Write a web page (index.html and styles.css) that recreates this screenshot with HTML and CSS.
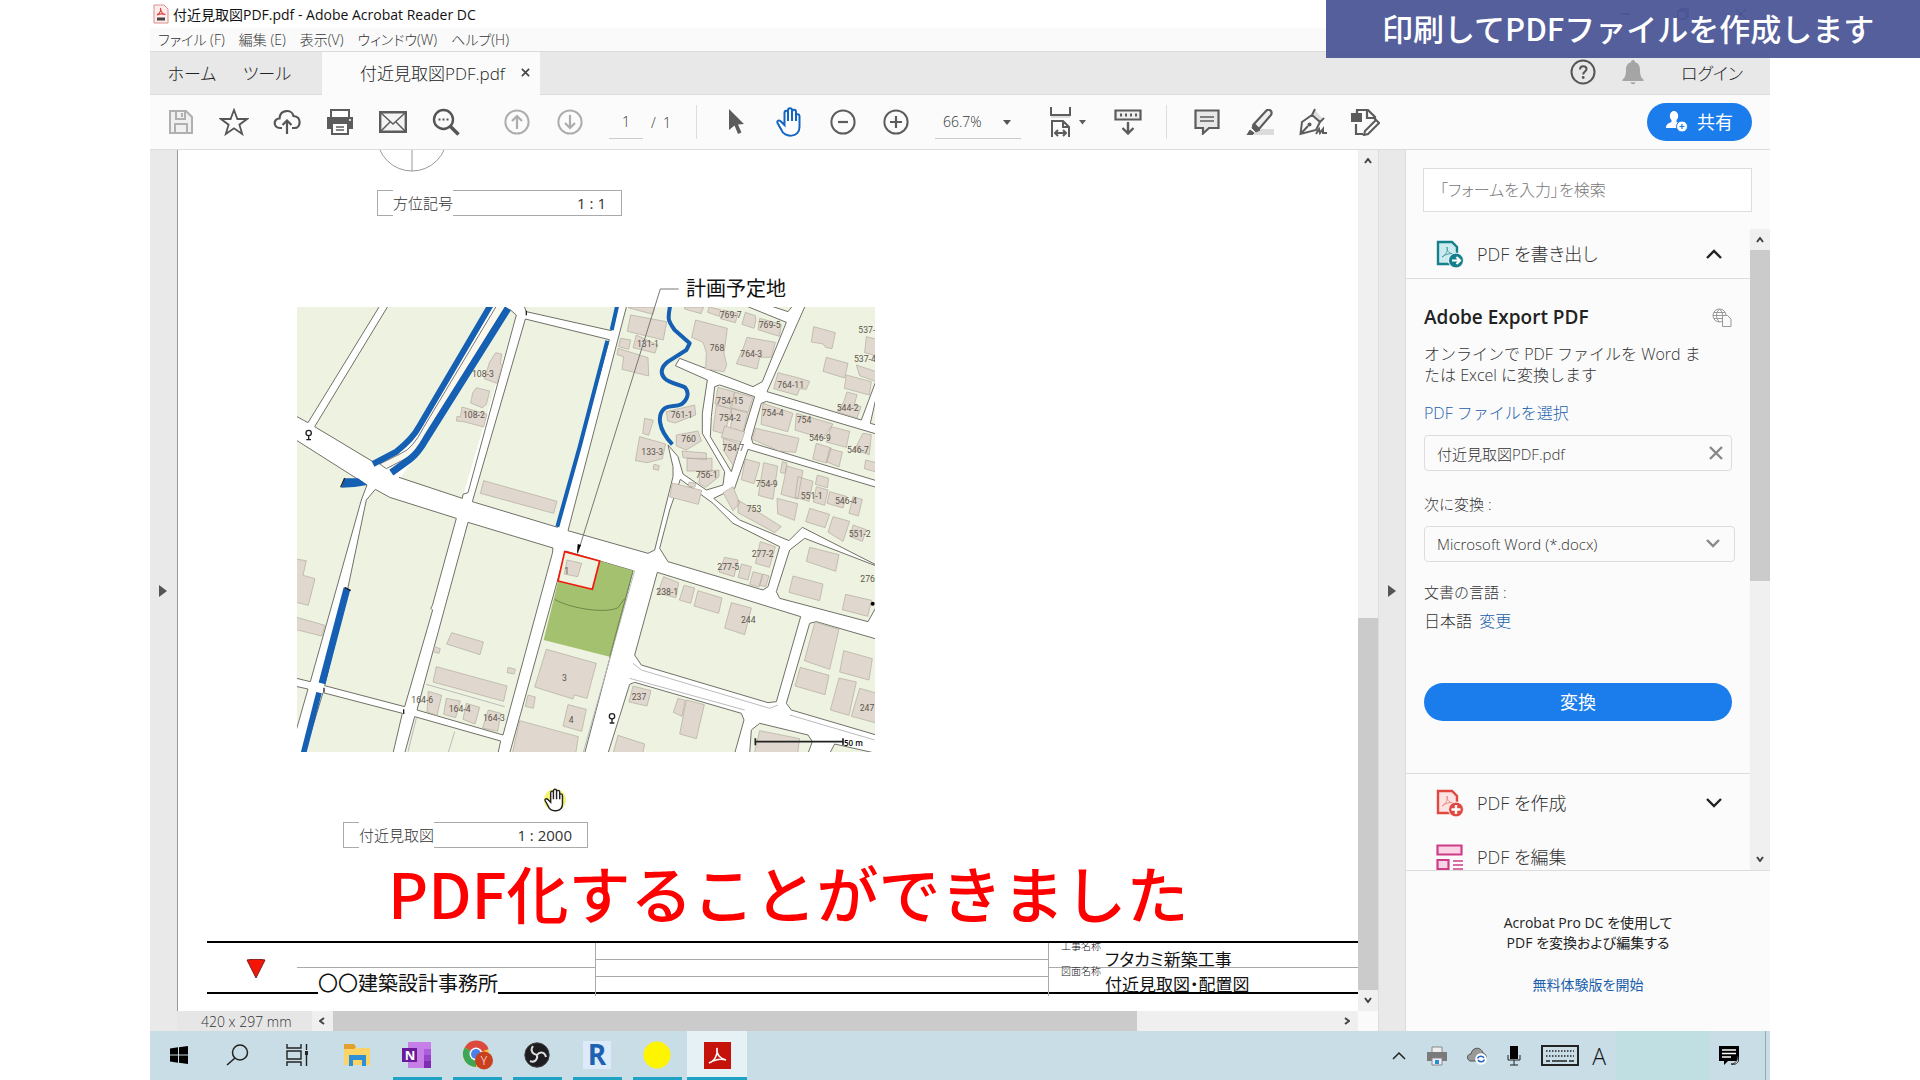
FILE: index.html
```
<!DOCTYPE html>
<html lang="ja">

<head>
    <meta charset="utf-8">
    <title>付近見取図PDF.pdf - Adobe Acrobat Reader DC</title>
    <link rel="stylesheet" href="styles.css">
</head>

<body>
    <div class="banner">印刷してPDFファイルを作成します</div>

    <div class="window">
        <header class="titlebar">
            <svg width="16" height="20" viewBox="0 0 16 20"><path d="M1 1h10l4 4v14H1z" fill="#fdeceb" stroke="#d9908c"/><path d="M4 11c3-2 4-5 3.500-7M7.500 5c.5 3 2 5 5 5.500M4 11c2-1 5-1.500 8.500-.5" fill="none" stroke="#d9443c" stroke-width="1.200"/><path d="M4 15h8" stroke="#444" stroke-width="3"/></svg>
            <span class="window-title">付近見取図PDF.pdf - Adobe Acrobat Reader DC</span>
            <div class="window-controls">
                <button aria-label="最小化"><svg width="12" height="12"><path d="M1 6h10" stroke="#22a"/></svg></button>
                <button aria-label="元に戻す"><svg width="12" height="12"><path d="M1 3h8v8H1zM3 3V1h8v8H9" fill="none" stroke="#22a"/></svg></button>
                <button aria-label="閉じる"><svg width="12" height="12"><path d="M1 1l10 10M11 1L1 11" stroke="#22a"/></svg></button>
            </div>
        </header>

        <nav class="menubar">
            <a href="#">ファイル (F)</a>
            <a href="#">編集 (E)</a>
            <a href="#">表示(V)</a>
            <a href="#">ウィンドウ(W)</a>
            <a href="#">ヘルプ(H)</a>
        </nav>

        <div class="tabs">
            <button class="tab-home">ホーム</button>
            <button class="tab-tool">ツール</button>
            <div class="tab-doc">
                <span>付近見取図PDF.pdf</span>
                <button aria-label="タブを閉じる"><svg width="9" height="9" viewBox="0 0 10 10"><path d="M1 1l8 8M9 1L1 9" stroke="#444" stroke-width="1.800"/></svg></button>
            </div>
            <div class="tabs-right">
                <button aria-label="ヘルプ"><svg width="26" height="26" viewBox="0 0 26 26"><circle cx="13" cy="13" r="11.500" fill="none" stroke="#555" stroke-width="2"/><path d="M10 10.500c0-4.500 6.500-4 6.500-.5 0 2.500-3.300 2.500-3.300 5.500" fill="none" stroke="#555" stroke-width="2"/><circle cx="13.200" cy="18.500" r="1.400" fill="#555"/></svg></button>
                <button aria-label="通知"><svg width="22" height="25" viewBox="0 0 22 25"><path d="M11 0c1.500 0 2 1 2 2.200 4 1 5 4 5 8 0 5 1 7 3.500 9.500v1.300H.5v-1.300C3 17.200 4 15.200 4 10.200c0-4 1-7 5-8C9 1 9.500 0 11 0zM8.500 22.300h5c-.5 2.500-4.500 2.500-5 0z" fill="#a5a5a5"/></svg></button>
                <a href="#">ログイン</a>
            </div>
        </div>

        <div class="toolbar">
            <button class="tool" aria-label="保存"><svg width="26" height="26" viewBox="0 0 26 26"><path d="M2 2h16l6 6v16H2z" fill="#f0f0f0" stroke="#b0b0b0" stroke-width="2"/><path d="M8 2v8h9V2M14 4v4M7 24v-9h12v9" fill="none" stroke="#b0b0b0" stroke-width="2"/></svg></button>
            <button class="tool" aria-label="スター"><svg width="30" height="28" viewBox="0 0 30 28"><path d="M15 2l3.400 9H28l-7.600 5.700L23.200 26 15 20.300 6.800 26l2.800-9.300L2 11h9.600z" fill="none" stroke="#555" stroke-width="1.800"/></svg></button>
            <button class="tool" aria-label="アップロード"><svg width="28" height="26" viewBox="0 0 28 26"><path d="M9 19H7C0 19 0 9.500 6.500 9.500 7 0 19 0 20.500 7 29 7.500 28 19 21.500 19H19M14 25V12M9.500 16l4.500-4.500 4.500 4.500" fill="none" stroke="#555" stroke-width="2.200"/></svg></button>
            <button class="tool" aria-label="印刷"><svg width="28" height="26" viewBox="0 0 28 26"><path d="M5 8V1h18v7" fill="#fff" stroke="#5c5c5c" stroke-width="2"/><path d="M1 8h26v12H1z" fill="#5c5c5c"/><path d="M6 14h16v11H6z" fill="#fff" stroke="#5c5c5c" stroke-width="2"/><path d="M10 18h8M10 21h8" stroke="#5c5c5c" stroke-width="1.500"/><circle cx="24" cy="11" r="1" fill="#fff"/></svg></button>
            <button class="tool" aria-label="メール"><svg width="28" height="22" viewBox="0 0 28 22"><path d="M1.200 1.200h25.600v19.600H1.200z" fill="#f4f4f4" stroke="#5c5c5c" stroke-width="2.400"/><path d="M2 2l12 11L26 2M2 20l9-9M26 20l-9-9" fill="none" stroke="#5c5c5c" stroke-width="1.500"/></svg></button>
            <button class="tool" aria-label="検索"><svg width="28" height="28" viewBox="0 0 28 28"><circle cx="11.500" cy="11.500" r="9.500" fill="none" stroke="#555" stroke-width="2.400"/><path d="M18.500 18.500l8 8" stroke="#555" stroke-width="3.600"/><path d="M6.500 11.500h10" stroke="#555" stroke-width="2.200" stroke-dasharray="2 2"/></svg></button>
            <button class="tool page-up" aria-label="前のページ"><svg width="26" height="26" viewBox="0 0 26 26"><circle cx="13" cy="13" r="11.600" fill="none" stroke="#adadad" stroke-width="2"/><path d="M13 20V7M8 12l5-5 5 5" fill="none" stroke="#adadad" stroke-width="2.200"/></svg></button>
            <button class="tool" aria-label="次のページ"><svg width="26" height="26" viewBox="0 0 26 26"><circle cx="13" cy="13" r="11.600" fill="none" stroke="#adadad" stroke-width="2"/><path d="M13 6v13M8 14l5 5 5-5" fill="none" stroke="#adadad" stroke-width="2.200"/></svg></button>
            <input class="page-number" type="text" value="1" aria-label="ページ">
            <span class="page-total">/&nbsp; 1</span>
            <span class="divider"></span>
            <button class="tool tool-select" aria-label="選択"><svg width="17" height="26" viewBox="0 0 17 26"><path d="M1 0l15 15-6 .5 3.500 8-3.500 1.500-3.500-8.500L1 21z" fill="#5c5c5c"/></svg></button>
            <button class="tool" aria-label="手のひら"><svg width="28" height="30" viewBox="0 0 28 30"><path d="M8.500 18V6c0-3 3.500-3 3.500 0v-2.500c0-3 4-3 4 0V5c0-3 4-3 4 0v4c0-2.500 3.500-2.500 3.500.5V20c0 11-15.500 11-18 3L1.500 16c-1-2.500 2-3.500 3.500-1.500zM12 6v8M16 4v10M20 6v8" fill="#fff" stroke="#1467bf" stroke-width="2"/></svg></button>
            <button class="tool" aria-label="縮小"><svg width="26" height="26" viewBox="0 0 26 26"><circle cx="13" cy="13" r="11.600" fill="none" stroke="#5c5c5c" stroke-width="2"/><path d="M8 13h10" stroke="#5c5c5c" stroke-width="2.200"/></svg></button>
            <button class="tool" aria-label="拡大"><svg width="26" height="26" viewBox="0 0 26 26"><circle cx="13" cy="13" r="11.600" fill="none" stroke="#5c5c5c" stroke-width="2"/><path d="M7 13h12M13 7v12" stroke="#5c5c5c" stroke-width="2.200"/></svg></button>
            <div class="zoom-box">
                <select aria-label="ズーム"><option>66.7%</option></select>
                <svg width="8" height="5"><path d="M0 0h8L4 5z" fill="#555"/></svg>
            </div>
            <button class="tool tool-fit" aria-label="幅に合わせる"><svg width="38" height="30" viewBox="0 0 38 30"><path d="M1 0v8h19V0M2 30V14h11l6 6v10M13 14v6h6M5 26h11M8 23l-3 3 3 3M13 23l3 3-3 3" fill="none" stroke="#5c5c5c" stroke-width="2"/><path d="M1 10h19" stroke="#ddd" stroke-width="2"/><path d="M29 13h7l-3.500 4.500z" fill="#5c5c5c"/></svg></button>
            <button class="tool" aria-label="スクロール"><svg width="28" height="26" viewBox="0 0 28 26"><path d="M1.500 1.500h25v9h-25z" fill="#eee" stroke="#5c5c5c" stroke-width="2.200"/><path d="M6 6h17" stroke="#5c5c5c" stroke-width="3" stroke-dasharray="2 3"/><path d="M14 13v11M8.500 19l5.500 5.500 5.500-5.500" fill="none" stroke="#5c5c5c" stroke-width="2.400"/></svg></button>
            <span class="divider divider-right"></span>
            <button class="tool" aria-label="注釈"><svg width="26" height="26" viewBox="0 0 26 26"><path d="M1.500 1.500h23V19H15l-6 5.500V19H1.500z" fill="#e8e8e8" stroke="#5c5c5c" stroke-width="2.200"/><path d="M6 8h14M6 12h14" stroke="#5c5c5c" stroke-width="1.600"/></svg></button>
            <button class="tool" aria-label="ハイライト"><svg width="28" height="26" viewBox="0 0 28 26"><path d="M9 20h19v6H7z" fill="#dcdcdc"/><path d="M8 15L20 2c3-3 7 0 5 4L13 20z" fill="#eee" stroke="#5c5c5c" stroke-width="2.200"/><path d="M7 15l7 6-4 2-4-4zM4 21l4 3-2 2H1z" fill="#5c5c5c" stroke="#5c5c5c"/></svg></button>
            <button class="tool" aria-label="署名"><svg width="28" height="28" viewBox="0 0 28 28"><path d="M16 2l7 8-3 3-7-6z" fill="#ddd"/><path d="M1.500 26L3 14l10-7 8 7-4 8zM1.500 26L9 18M13 7l3-6M21 14l4-4M17 26l3-5 1 4 3-4v4h4" fill="none" stroke="#5c5c5c" stroke-width="2"/><circle cx="10.500" cy="16.500" r="2" fill="#5c5c5c"/></svg></button>
            <button class="tool" aria-label="その他のツール"><svg width="29" height="28" viewBox="0 0 29 28"><path d="M6 5V2h11l7 7v3M16 2v8h7" fill="none" stroke="#5c5c5c" stroke-width="2.200"/><path d="M0 5h11v9H0z" fill="#5c5c5c"/><path d="M5 16v10h7" fill="none" stroke="#5c5c5c" stroke-width="2.200"/><path d="M14 23L25 12l3 3-11 11-4 1z" fill="#fff" stroke="#5c5c5c" stroke-width="2"/></svg></button>
            <button class="share">
                <svg width="22" height="21" viewBox="0 0 22 21"><ellipse cx="8" cy="5" rx="4.200" ry="5" fill="#fff"/><path d="M0 17c0-4 3-5 5.500-6V9h5v2c2 1 3 1.500 3.500 6z" fill="#fff"/><circle cx="16" cy="15.500" r="5.500" fill="#fff" stroke="#1b7cec"/><path d="M16 13v5M13.500 15.500h5" stroke="#1b7cec" stroke-width="1.200"/></svg>
                共有
            </button>
        </div>

        <main class="main">
            <button class="strip strip-left" aria-label="ナビゲーションパネル"><svg width="8" height="12"><path d="M0 0l8 6-8 6z" fill="#555"/></svg></button>

            <section class="viewer">
                <div class="page-row">
                    <div class="sheet">
                        <svg class="north" width="70" height="22" viewBox="0 0 70 22"><circle cx="35" cy="-14" r="35" fill="none" stroke="#999"/><path d="M35 0v21" stroke="#999"/></svg>
                        <div class="label-box label-north"><span>方位記号</span><b>1 : 1</b></div>

                        <svg class="map" width="578" height="475" viewBox="22 21 1734 1425">
                            <clipPath id="frame"><path d="M22 111h1734v1335H22z"/></clipPath>
                            <g clip-path="url(#frame)">
                                <!-- blocks -->
                                <g class="block">
                                    <path d="M0 90H281L55 458 0 428z"/>
                                    <path class="bare" d="M292 111L75 470 250 578 320 545 370 500 600 111z"/>
                                    <path d="M303 95L75 470 250 575" fill="none"/>
                                    <path class="bare" d="M660 118l20 17-162 550-188-60 50-65z"/>
                                    <path d="M660 118l20 17-145 533-15 5-2 12-190-63" fill="none"/>
                                    <path d="M700 100l10 25 255 57 20-82z"/>
                                    <path d="M707 147l252 62-155 563-256-77z"/>
                                    <path d="M1013 100H1350l140 57-72 178-28 15-220-85-13 22 96 43-15 100v60l67 115-5 40-50 15-70-48-15-52-30-35 15 65v30l-55 220-20 10-240-68z"/>
                                    <path d="M1420 100l75 25 20-25z"/>
                                    <path d="M1550 100L1432 365l283 85 45-120V100z"/>
                                    <path d="M1760 380l-18 80 18 5z"/>
                                    <path d="M1275 350l15-5 105 35-70 225-63-105 3-60z"/>
                                    <path d="M1415 400l15-6 330 98v140l-370-112-5-15z"/>
                                    <path d="M1375 538l385 114v233l-222-113-40 40-148-62-78-65 63-30z"/>
                                    <path d="M1172 628l98 72 60 60 140 70-35 120-15 10-285-85-25-40 30-115z"/>
                                    <path d="M1545 805l215 83v122l-25 45-265-70-10-20 40-125z"/>
                                    <path d="M1103 907l430 133-73 255-25 3-380-113-20-30z"/>
                                    <path d="M1560 1060l20-5 180 52v288l-255-75-15-20z"/>
                                    <path d="M1020 1243l15-6 320 93 8 20-28 100H955z"/>
                                    <path d="M1385 1380l25-20 145 35 13 20-13 35H1380z"/>
                                    <path d="M1620 1450l15-28 125 28z"/>
                                    <path d="M828 843l202 59-145 548H660z"/>
                                    <path d="M535 757l255 77-2 16-148 545-258-75z"/>
                                    <path d="M257 658l43 24 200 63-72 262-5 8 6 5-84 290-240-63 60-247 65-310z"/>
                                    <path d="M0 498l232 147-17 45L62 1235 0 1220z"/>
                                    <path d="M0 1245l55 12L0 1450z"/>
                                    <path d="M100 1268l238 62-28 120H45z"/>
                                    <path d="M375 1340l258 73-8 37H345z"/>
                                </g>
                                <!-- kerb lines -->
                                <path d="M1030 1180l25 20 385 115 25-10M1020 1225l345 95M1500 1335l255 75M1035 902L880 1450M380 1345l-25 100M495 1385l-20 65M410 1243l235 67" fill="none" stroke="#bbb" stroke-width="3"/>
                                <!-- water -->
                                <path d="M622 105L402 472Q370 535 335 550L270 582l20 14 65-34Q390 535 410 495L650 105z" fill="#fbf8ee" stroke="#777" stroke-width="3"/>
                                <g fill="none" stroke="#1560b2">
                                    <path d="M603 105L388 470Q370 505 320 545L250 582" stroke-width="18"/>
                                    <path d="M655 115L410 505Q385 550 360 568L305 608" stroke-width="21"/>
                                    <path d="M983 105l-17 75M953 212l-83 318-67 240" stroke-width="12"/>
                                    <path d="M172 955l-75 285" stroke-width="21"/>
                                    <path d="M88 1268l-46 180" stroke-width="17"/>
                                    <path d="M1142 105c-10 45-5 50 13 75l45 40-10 20-55 35c-20 15-25 35-10 50 15 15 50 20 62 28 12 15 8 35-12 50-15 8-35 2-50 12-22 18-22 60 23 108" stroke-width="12" stroke-linejoin="round"/>
                                </g>
                                <path d="M165 625h40l28 20-38 6-40 2z" fill="#1560b2"/>
                                <path d="M153 652l12-28M165 952l18 10M103 1253v14M342 1318v14M710 122v14" stroke="#222" stroke-width="4"/>
                                <!-- park and site -->
                                <path d="M805 935l125-62 100 29-70 258-198-50z" fill="#a3c16f"/>
                                <path d="M795 988c40 25 150 45 190 25l20-28M1030 902l-70 258" fill="none" stroke="#6d8a49" stroke-width="3"/>
                                <path d="M825 845l105 28-22 85-103-25z" fill="#edf3e0" stroke="#f3170c" stroke-width="5"/>
                                <!-- buildings -->
                                <g class="building">
                                    <path d="M618 248l18 4-4 30 6 4-16 54-38-14 16-50z"/>
                                    <path d="M560 353l40 10-10 40-12 10-35-14 6-30z"/>
                                    <path d="M517 411l75 22-10 38-60-16-22-2 2-14 10 2z"/>
                                    <path d="M582 632l220 62-10 36-220-60z"/>
                                    <path d="M1020 111h75l-5 22-75-20z"/>
                                    <path d="M1023 135l108 20-10 55-108-26z"/>
                                    <path d="M993 205l30 5-6 28-30-8zM1040 195l64 30-8 24-66-16z"/>
                                    <path d="M985 235l90 28 2 55-80-20 5-38-20-6z"/>
                                    <path d="M1185 111h57l-8 20-49-14zM1258 111l35 8-4 20-35-12zM1300 120l45 10-8 28-45-12z"/>
                                    <path d="M1367 127l30 10 2 14-6 24-36-12zM1410 145l65 18-6 36-64-20z"/>
                                    <path d="M1218 150l95 25-10 75 8 35-8 20-55-8 2-50-10-30-34-15z"/>
                                    <path d="M1372 202l85 15-12 45-35 0-8 35-62-16 22-50z"/>
                                    <path d="M1572 170l65 18-10 48-20-4-6-10-36-6z"/>
                                    <path d="M1610 262l65 18-10 44-65-20z"/>
                                    <path d="M1465 308l55 14 40 12-10 24-20-2-8 20-70-20z"/>
                                    <path d="M1730 200l30 8v50l-35-10zM1700 285l60 20v30l-50-18zM1670 315l75 20-6 40-75-20z"/>
                                    <path d="M1672 366l30 8-8 30 20 6-12 34-60-18 20-30z"/>
                                    <path d="M1285 352l50 14-14 50-45-14z"/>
                                    <path d="M1335 366l55 16-14 44-50-12zM1325 415l50 14-16 60-38-12 6-30z"/>
                                    <path d="M1280 405l45 12-20 75-35-10z"/>
                                    <path d="M1305 468l60 18-10 30-60-14zM1300 505l50 16-20 65-25-40z"/>
                                    <path d="M1420 400l90 30-16 55-80-22z"/>
                                    <path d="M1520 430l110 32-30 44-84-26zM1625 470l55 14-10 48-60-16z"/>
                                    <path d="M1398 475l130 30-10 42-50-4-80-35z"/>
                                    <path d="M1580 520l45 14-14 45-42-12zM1620 536l38 10-10 45-38-16zM1720 490l25 4-6 60-45-14zM1728 570l32 8v28l-36-10z"/>
                                    <path d="M1130 425l85-20 3 30-62 24-22-6zM1065 445l26 6-14 45-18-6z"/>
                                    <path d="M1160 495l65-12 10 30-45 27-30-12z"/>
                                    <path d="M1050 500l78 22-10 44-45 12-36-6z"/>
                                    <path d="M1177 543l73 6v20l-70-6zM1192 565h75v38h-75zM1230 605l58-5v20l-40 32-20-12z"/>
                                    <path d="M1093 583l16 4-3 14-16-4zM1148 639l88 22-10 42-86-22zM1198 636l20 4-2 12-20-4z"/>
                                    <path d="M1367 567l44 12-18 62-38-12z"/>
                                    <path d="M1422 578l42 10-14 100-44-12zM1478 575l14 4-6 32-14-4z"/>
                                    <path d="M1492 588l48 14-16 85-50-14zM1525 620l45 14-12 60-42-12z"/>
                                    <path d="M1583 615l34 10-4 28-36-10zM1580 650l35 10-10 46-34-10zM1620 665l50 14-10 35-48-14z"/>
                                    <path d="M1690 680l28 8-12 50-28-8zM1462 685l62 16-10 50-50-20zM1560 715l60 18-14 40-58-18z"/>
                                    <path d="M1300 668l30-18 20 50-20 22zM1345 690l75 45 55 35-20 18-110-60z"/>
                                    <path d="M1630 740l50 14-20 60-45-28zM1690 765l40 14-12 35-36-14z"/>
                                    <path d="M1412 815l45 15-18 62-42-12zM1305 862l40 8-12 50-45-14z"/>
                                    <path d="M1355 882l30 8-10 40-30-8zM1390 905l28 8-10 38-28-8zM1420 912l18 6-10 32-18-4z"/>
                                    <path d="M1560 832l88 22-10 50-88-30zM1510 918l90 24-10 50-92-25zM1668 973l78 18-12 48-76-20z"/>
                                    <path d="M1122 920l45 18-8 45-55-14zM1183 946l32 8-12 46-34-10zM1225 962l72 22-10 46-74-22z"/>
                                    <path d="M1325 998l60 16-20 80-60-20z"/>
                                    <path d="M1576 1056l72 22-28 120-76-26zM1532 1192l86 24-12 58-90-26zM1662 1142l86 24-10 64-88-24zM1648 1224l52 12-22 100-56-16zM1710 1255l50 14v90l-75-20z"/>
                                    <path d="M1030 1248l54 14-12 46-54-12zM1165 1285l22 6-10 48-26-12zM1190 1290l54 14-24 102-50-14z"/>
                                    <path d="M985 1396l80 26-6 30H970zM1410 1382l120 24-6 44h-130z"/>
                                    <path d="M832 870l44 10-12 40-40-8z"/>
                                    <path d="M770 1138l150 42-28 105-38-10-4 12-115-36z"/>
                                    <path d="M835 1304l55 14-14 66-56-16zM715 1275l22 6-6 34-24-6zM690 1352l176 48-8 50H668z"/>
                                    <path d="M486 1088l95 28-10 38-100-32zM440 1190l212 58-10 46-212-58z"/>
                                    <path d="M434 1130l18 6-4 14-16-4zM655 1192l22 6-4 14-20-4z"/>
                                    <path d="M416 1264l40 12-14 60-30-10zM470 1285l42 8-14 50-36-10zM530 1300l40 12-14 50-36-14zM596 1320l38 10-10 54-45-10z"/>
                                    <path d="M0 864l50 8-10 44 36 10-20 80-56-14zM0 1036l106 30-10 32-96-24z"/>
                                </g>
                                <!-- lot numbers -->
                                <g class="lot">
                                    <text x="547" y="321">108-3</text>
                                    <text x="520" y="445">108-2</text>
                                    <text x="1042" y="230">131-1</text>
                                    <text x="1290" y="143">769-7</text>
                                    <text x="1407" y="174">769-5</text>
                                    <text x="1260" y="243">768</text>
                                    <text x="1352" y="261">764-3</text>
                                    <text x="1463" y="355">764-11</text>
                                    <text x="1706" y="188">537-</text>
                                    <text x="1693" y="276">537-4</text>
                                    <text x="1641" y="424">544-2</text>
                                    <text x="1280" y="402">754-15</text>
                                    <text x="1288" y="454">754-2</text>
                                    <text x="1298" y="542">754-7</text>
                                    <text x="1416" y="437">754-4</text>
                                    <text x="1521" y="458">754</text>
                                    <text x="1558" y="514">546-9</text>
                                    <text x="1672" y="549">546-7</text>
                                    <text x="1143" y="445">761-1</text>
                                    <text x="1175" y="516">760</text>
                                    <text x="1055" y="555">133-3</text>
                                    <text x="1218" y="623">756-1</text>
                                    <text x="1398" y="651">754-9</text>
                                    <text x="1533" y="686">551-1</text>
                                    <text x="1636" y="702">546-4</text>
                                    <text x="1371" y="726">753</text>
                                    <text x="1677" y="800">551-2</text>
                                    <text x="1386" y="860">277-2</text>
                                    <text x="1283" y="900">277-5</text>
                                    <text x="1712" y="937">276</text>
                                    <text x="1100" y="975">238-1</text>
                                    <text x="1354" y="1060">244</text>
                                    <text x="1026" y="1290">237</text>
                                    <text x="1710" y="1324">247</text>
                                    <text x="817" y="1233">3</text>
                                    <text x="837" y="1358">4</text>
                                    <text x="824" y="912">1</text>
                                    <text x="365" y="1298">164-6</text>
                                    <text x="477" y="1326">164-4</text>
                                    <text x="580" y="1354">164-3</text>
                                </g>
                                <g fill="none" stroke="#222" stroke-width="4">
                                    <circle cx="57" cy="489" r="8"/><path d="M57 497v14M50 509h14"/>
                                    <circle cx="967" cy="1339" r="8"/><path d="M967 1347v14M960 1359h14"/>
                                    <path d="M1397 1415h263M1397 1405v21M1660 1405v21" stroke-width="5"/>
                                </g>
                                <circle cx="1749" cy="1001" r="6"/>
                                <text class="scale" x="1663" y="1428">50 m</text>
                            </g>
                            <path d="M1167 57h-55L864 850" fill="none" stroke="#777" stroke-width="3"/>
                            <path d="M862 852l2-30 10 3z"/>
                            <text class="site-name" x="1189" y="78">計画予定地</text>
                        </svg>

                        <div class="label-box label-map"><span>付近見取図</span><b>1 : 2000</b></div>
                        <p class="caption">PDF化することができました</p>

                        <div class="title-block">
                            <div class="mark"><svg width="20" height="20" viewBox="0 0 20 20"><path d="M1 1q9-2 18 0l-9 18z" fill="#f51505" stroke="#722"/></svg></div>
                            <div class="company"><div class="rule"></div><span>〇〇建築設計事務所</span></div>
                            <div class="blank"><i></i><i></i><i></i></div>
                            <dl class="names">
                                <div><dt>工事名称</dt><dd>フタカミ新築工事</dd></div>
                                <div><dt>図面名称</dt><dd>付近見取図・配置図</dd></div>
                            </dl>
                        </div>

                        <svg class="hand-cursor" width="22" height="24" viewBox="0 0 28 30"><circle cx="14" cy="15" r="14" fill="#f0f03c" opacity=".7"/><path d="M8.500 18V6c0-3 3.500-3 3.500 0v-2.500c0-3 4-3 4 0V5c0-3 4-3 4 0v4c0-2.500 3.500-2.500 3.500.5V20c0 11-15.500 11-18 3L1.500 16c-1-2.500 2-3.500 3.500-1.500zM12 6v8M16 4v10M20 6v8" fill="#fff" stroke="#222" stroke-width="1.800"/></svg>
                    </div>
                    <div class="scroll-v">
                        <svg width="8" height="6"><path d="M1 5l3-4 3 4" fill="none" stroke="#444" stroke-width="2"/></svg>
                        <span class="thumb-v"></span>
                        <svg width="8" height="6"><path d="M1 1l3 4 3-4" fill="none" stroke="#444" stroke-width="2"/></svg>
                    </div>
                </div>
                <div class="statusbar">
                    <span class="page-size">420 x 297 mm</span>
                    <div class="scroll-h">
                        <svg width="6" height="8"><path d="M5 1L1 4l4 3" fill="none" stroke="#444" stroke-width="2"/></svg>
                        <span class="thumb-h"></span>
                        <svg width="6" height="8"><path d="M1 1l4 3-4 3" fill="none" stroke="#444" stroke-width="2"/></svg>
                    </div>
                    <span class="corner"></span>
                </div>
            </section>

            <button class="strip strip-right" aria-label="ツールパネル"><svg width="8" height="12"><path d="M0 0l8 6-8 6z" fill="#555"/></svg></button>

            <aside class="panel">
                <input class="search" type="text" placeholder="「フォームを入力」を検索" aria-label="検索">
                <div class="tools">
                    <div class="tools-list">
                        <button class="tool-head">
                            <svg width="28" height="28" viewBox="0 0 28 28"><path d="M2 2h14l5 5v17H2z" fill="#cdebee" stroke="#14808c" stroke-width="2.400"/><path d="M6 17c4-2 6-6 5-10 0 5 3 7 7 7-4-1-8 0-12 3z" fill="none" stroke="#4aa0aa"/><circle cx="20" cy="20.500" r="7.500" fill="#14808c" stroke="#fafafa"/><path d="M16 20.500h7M20.500 17l3.500 3.500-3.500 3.500" fill="none" stroke="#fff" stroke-width="2.200"/></svg>
                            <span>PDF を書き出し</span>
                            <svg width="16" height="10"><path d="M1 9l7-7 7 7" fill="none" stroke="#222" stroke-width="2.400"/></svg>
                        </button>
                        <div class="export">
                            <div class="export-title">
                                <h2>Adobe Export PDF</h2>
                                <svg width="20" height="19" viewBox="0 0 20 19"><circle cx="7.500" cy="7.500" r="6.500" fill="none" stroke="#999"/><path d="M1 7.500h12M2 4.500h11M2 10.500h8M7.500 1c-4 4-4 9 0 13M7.500 1c3 3 3 5 3 6" fill="none" stroke="#999"/><path d="M10.500 7.500h5l3.500 3.500v7.500h-8.500z" fill="#fafafa" stroke="#999"/></svg>
                            </div>
                            <p class="desc">オンラインで PDF ファイルを Word ま<br>たは Excel に変換します</p>
                            <a class="pick" href="#">PDF ファイルを選択</a>
                            <div class="file-box">
                                <span>付近見取図PDF.pdf</span>
                                <button aria-label="削除"><svg width="14" height="14"><path d="M1 1l12 12M13 1L1 13" stroke="#888" stroke-width="2.400"/></svg></button>
                            </div>
                            <label for="format">次に変換 :</label>
                            <div class="select-box">
                                <select id="format"><option>Microsoft Word (*.docx)</option></select>
                                <svg width="14" height="9"><path d="M1 1l6 6 6-6" fill="none" stroke="#888" stroke-width="2.400"/></svg>
                            </div>
                            <p class="lang-title">文書の言語 :</p>
                            <p class="lang">日本語 <a href="#">変更</a></p>
                            <button class="convert">変換</button>
                        </div>
                        <button class="tool-head tool-create">
                            <svg width="28" height="28" viewBox="0 0 28 28"><path d="M2 2h14l5 5v17H2z" fill="#fde3e1" stroke="#e1483f" stroke-width="2.400"/><path d="M6 17c4-2 6-6 5-10 0 5 3 7 7 7-4-1-8 0-12 3z" fill="none" stroke="#ee8a84"/><circle cx="20" cy="20.500" r="7.500" fill="#e1483f" stroke="#fafafa"/><path d="M15.500 20.500h9M20 16v9" fill="none" stroke="#fff" stroke-width="2.400"/></svg>
                            <span>PDF を作成</span>
                            <svg width="16" height="10"><path d="M1 1l7 7 7-7" fill="none" stroke="#222" stroke-width="2.400"/></svg>
                        </button>
                        <button class="tool-head tool-edit">
                            <svg width="28" height="28" viewBox="0 0 28 28"><path d="M1.500 2.500h24v9h-24zM1.500 17h11v9h-11z" fill="#f9d3e6" stroke="#cf3c88" stroke-width="2.200"/><path d="M17 18h10M17 22h10M17 26h10" stroke="#cf3c88" stroke-width="1.500"/></svg>
                            <span>PDF を編集</span>
                        </button>
                    </div>
                    <div class="tools-scroll">
                        <svg width="8" height="6"><path d="M1 5l3-4 3 4" fill="none" stroke="#444" stroke-width="2"/></svg>
                        <span></span>
                        <svg width="8" height="6"><path d="M1 1l3 4 3-4" fill="none" stroke="#444" stroke-width="2"/></svg>
                    </div>
                </div>
                <div class="promo">
                    <p>Acrobat Pro DC を使用して<br>PDF を変換および編集する</p>
                    <a href="#">無料体験版を開始</a>
                </div>
            </aside>
        </main>

        <footer class="taskbar">
            <button aria-label="スタート"><svg width="18" height="18" viewBox="0 0 18 18"><path d="M0 2.500l8-1.200v7.200H0zM9 1.200L18 0v8.500H9zM0 9.500h8v7.200l-8-1.200zM9 9.500h9V18l-9-1.200z"/></svg></button>
            <button aria-label="検索"><svg width="23" height="22" viewBox="0 0 23 22"><circle cx="14" cy="8.500" r="7.500" fill="none" stroke="#222" stroke-width="1.500"/><path d="M9 14l-8 7" stroke="#222" stroke-width="1.600"/></svg></button>
            <button aria-label="タスクビュー"><svg width="23" height="22" viewBox="0 0 23 22"><path d="M1 0v4h14V0M1 22v-4h14v4M1 7h14v8H1zM20.500 0v6M20.500 11v11" fill="none" stroke="#222" stroke-width="1.400"/><path d="M20.500 7v4" stroke="#222" stroke-width="3"/></svg></button>
            <button aria-label="エクスプローラー"><svg width="27" height="22" viewBox="0 0 27 22"><path d="M0 1h10l3 3h13v17H0z" fill="#fbd468"/><path d="M0 0h10l2 3-2 2H0z" fill="#e0a22c"/><path d="M5 22V11h17v11h-4v-6h-9v6z" fill="#2f8fd6"/></svg></button>
            <button class="open" aria-label="OneNote"><svg width="30" height="26" viewBox="0 0 30 26"><path d="M6 0h23v26H6z" fill="#c77fe8"/><path d="M22 7h7v6h-7z" fill="#ad5ddb"/><path d="M22 13h7v6h-7z" fill="#9a43cc"/><path d="M22 19h7v7h-7z" fill="#7e2db3"/><path d="M0 6h15v14H0z" fill="#6a1b9a"/><text x="8" y="18" text-anchor="middle" fill="#fff" font-size="13" font-weight="700">N</text></svg></button>
            <button class="open" aria-label="Chrome"><svg width="31" height="30" viewBox="0 0 31 30"><circle cx="14" cy="14" r="13" fill="#f5c33b"/><path d="M14 14L2.700 7.500A13 13 0 0 1 26.500 9z" fill="#db4a3c"/><path d="M14 14L2.700 7.500A13 13 0 0 0 14 27z" fill="#3da757"/><circle cx="14" cy="14" r="6.500" fill="#fff"/><circle cx="14" cy="14" r="5" fill="#4a80e8"/><circle cx="22" cy="20.500" r="9" fill="#c9401f"/><text x="22" y="25" text-anchor="middle" fill="#fff" font-size="12">Y</text></svg></button>
            <button class="open" aria-label="OBS"><svg width="26" height="26" viewBox="0 0 26 26"><circle cx="13" cy="13" r="12.200" fill="#1d1c20" stroke="#444"/><path d="M13 13c-5-1-7-5-4-9M13 13c3-4 8-3 9 2M13 13c1 5-3 8-7 6" fill="none" stroke="#ddd" stroke-width="2"/></svg></button>
            <button class="open" aria-label="Revit"><svg class="revit" width="28" height="28" viewBox="0 0 28 28"><path d="M0 0h28v28H0z" fill="#dceafa"/><text x="14" y="24" text-anchor="middle" fill="#1d62b0" font-size="28" font-weight="700">R</text></svg></button>
            <button class="open" aria-label="ポインター"><svg width="28" height="28"><circle cx="14" cy="14" r="13.500" fill="#fff500"/></svg></button>
            <button class="open active" aria-label="Acrobat"><svg width="27" height="27" viewBox="0 0 27 27"><path d="M0 0h27v27H0z" fill="#c5130c"/><path d="M5 21c6-2 9-9 8-15-1 7 4 11 9 12-6-2-12 0-17 3z" fill="none" stroke="#fff" stroke-width="1.600"/></svg></button>

            <div class="tray">
                <svg width="15" height="9"><path d="M1 8l6-6 6 6" fill="none" stroke="#222" stroke-width="1.500"/></svg>
                <svg width="20" height="20" viewBox="0 0 20 20"><path d="M5 1h10v6H5z" fill="#eee" stroke="#888"/><path d="M0 6h20v9H0z" fill="#7a7a7a"/><path d="M5 12h10v7H5z" fill="#eef" stroke="#888"/><path d="M8 14h4v4H8z" fill="#2a8fd0"/></svg>
                <svg width="20" height="18" viewBox="0 0 20 18"><path d="M3 14C-1 12 0 7 4 7 5 0 14-1 16 6c5 2 4 8-1 8z" fill="#999" stroke="#555"/><circle cx="14" cy="12" r="5.800" fill="#fff"/><path d="M10.500 11.500c1-3 5-3 6.500-.5M17.500 12.500c-1 3-5 3-6.500.5" fill="none" stroke="#2567c4" stroke-width="1.500"/></svg>
                <svg width="14" height="20" viewBox="0 0 14 20"><path d="M3 0h8v13H3z"/><path d="M1 9v5h12V9M7 14v5M3 19h8" fill="none" stroke="#222"/></svg>
                <svg class="keyboard" width="38" height="21" viewBox="0 0 38 21"><path d="M1 1h36v19H1z" fill="none" stroke="#222" stroke-width="2"/><path d="M5 6h28M5 11h28" stroke="#222" stroke-width="1.500" stroke-dasharray="1.500 1.500"/><path d="M5 16h4M11 16h15M28 16h5" stroke="#222" stroke-width="1.500"/></svg>
                <span class="ime">A</span>
                <span class="clock"></span>
                <svg width="20" height="20" viewBox="0 0 20 20"><path d="M0 0h20v15H9l-4 4v-4H0z"/><path d="M3 4h14M3 7.500h14M3 11h9" stroke="#fff" stroke-width="1.500"/><path d="M12 18a6 6 0 0 0 6-8c4 4 0 10-6 8z" fill="#fff" stroke="#222"/></svg>
                <span class="desktop-edge"></span>
            </div>
        </footer>
    </div>
</body>

</html>
```
FILE: styles.css
```
* {
    box-sizing: border-box;
}

body {
    margin: 0;
    background: #fff;
    color: #333;
    font-family: "Open Sans", "Noto Sans CJK JP", sans-serif;
    font-feature-settings: "palt";
    font-weight: 300;
}

button,
input,
select {
    margin: 0;
    padding: 0;
    border: 0;
    background: none;
    color: inherit;
    font: inherit;
    font-feature-settings: inherit;
}

svg {
    display: block;
    flex: none;
}

p,
h2,
dl,
dd {
    margin: 0;
}

a {
    color: #1b5fac;
    text-decoration: none;
}

.banner {
    position: absolute;
    top: 0;
    right: 0;
    z-index: 2;
    width: 594px;
    height: 58px;
    padding-left: 56px;
    background: rgba(71, 83, 148, 0.93);
    color: #fff;
    font-family: "Noto Sans CJK JP", sans-serif;
    font-feature-settings: normal;
    font-size: 31px;
    font-weight: 500;
    line-height: 56px;
    white-space: nowrap;
}

.window {
    display: flex;
    flex-direction: column;
    height: 100vh;
    margin: 0 150px;
}

/* title and menu */
.titlebar {
    display: flex;
    align-items: center;
    height: 28px;
    padding-left: 3px;
    gap: 4px;
    color: #111;
    font-size: 14px;
    font-weight: 400;
    white-space: nowrap;
}

.window-controls {
    display: flex;
    margin-left: auto;
}

.window-controls button {
    display: grid;
    place-items: center;
    width: 58px;
    height: 28px;
}

.menubar {
    display: flex;
    align-items: center;
    height: 23px;
    padding-left: 8px;
    gap: 14px;
    background: #fafafa;
    font-size: 14px;
    line-height: 20px;
}

.menubar a {
    color: #333;
}

/* tabs */
.tabs {
    display: flex;
    align-items: center;
    height: 44px;
    padding-bottom: 2px;
    background: #e8e8e8;
    border-top: 1px solid #dadada;
    border-bottom: 1px solid #dadada;
    color: #222;
    font-size: 17px;
}

.tab-home {
    width: 84px;
}

.tab-tool {
    width: 66px;
}

.tab-doc {
    display: flex;
    align-items: center;
    align-self: stretch;
    justify-content: space-between;
    width: 218px;
    margin: 0 0 -3px 22px;
    padding: 0 10px 3px 38px;
    background: #fbfbfb;
}

.tabs-right {
    display: flex;
    align-items: center;
    gap: 26px;
    margin-left: auto;
    padding-right: 27px;
}

.tabs-right a {
    margin-left: 11px;
    color: #222;
}

/* toolbar */
.toolbar {
    display: flex;
    align-items: center;
    height: 55px;
    padding: 0 18px 0 4px;
    background: #fbfbfb;
    border-bottom: 1px solid #dcdcdc;
    font-size: 14px;
}

.tool {
    display: grid;
    place-items: center;
    width: 53px;
    height: 54px;
}

.page-up {
    margin-left: 18px;
}

.page-number {
    width: 34px;
    height: 34px;
    margin-left: 13px;
    border-bottom: 1px solid #ccc;
    text-align: center;
}

.page-total {
    margin-left: 8px;
}

.divider {
    width: 1px;
    height: 34px;
    margin-left: 25px;
    background: #ddd;
}

.tool-select {
    margin-left: 13px;
}

.zoom-box {
    position: relative;
    width: 86px;
    height: 34px;
    margin-left: 13px;
    border-bottom: 1px solid #ccc;
}

.zoom-box select {
    width: 100%;
    height: 100%;
    padding-left: 8px;
    appearance: none;
}

.zoom-box svg {
    position: absolute;
    top: 15px;
    right: 10px;
}

.tool-fit {
    margin: 0 6px 0 21px;
}

.divider-right {
    margin: 0 13px 0 12px;
}

.share {
    display: flex;
    align-items: center;
    justify-content: center;
    gap: 9px;
    width: 105px;
    height: 38px;
    margin-left: auto;
    padding-bottom: 2px;
    border-radius: 19px;
    background: #1b7cec;
    color: #fff;
    font-size: 18px;
    font-weight: 400;
}

/* main area */
.main {
    display: flex;
    flex: 1;
    min-height: 0;
}

.strip {
    display: grid;
    place-items: center;
    flex: none;
    background: #e9e9e9;
}

.strip-left {
    width: 27px;
    padding-right: 2px;
}

.strip-right {
    width: 28px;
    border-left: 1px solid #dcdcdc;
    border-right: 1px solid #dcdcdc;
}

.viewer {
    display: flex;
    flex: 1;
    flex-direction: column;
    min-width: 0;
}

.page-row {
    display: flex;
    flex: 1;
    min-height: 0;
}

.sheet {
    position: relative;
    flex: 1;
    min-width: 0;
    border-left: 1px solid #999;
    background: #fff;
    overflow: hidden;
}

.north {
    margin-left: 199px;
}

.label-box {
    display: flex;
    justify-content: space-between;
    width: 245px;
    height: 26px;
    padding: 0 15px;
    border: 1px solid #aaa;
    font-size: 15px;
    line-height: 24px;
}

.label-box span {
    height: 28px;
    margin-top: -2px;
    background: #fff;
    font-feature-settings: normal;
    line-height: 28px;
}

.label-box b {
    font-weight: 400;
}

.label-north {
    margin: 18px 0 0 199px;
}

.map {
    margin: 61px 0 0 119px;
    overflow: visible;
}

.label-map {
    margin: 70px 0 0 165px;
}

.block path {
    fill: #edf3e0;
    stroke: #707068;
    stroke-width: 3;
}

.block .bare {
    stroke: none;
}

.block path[fill="none"] {
    fill: none;
}

.building path {
    fill: #e0d8ce;
    stroke: #b0a89c;
    stroke-width: 2;
}

.lot {
    fill: #5c544c;
    font-family: Roboto, sans-serif;
    font-size: 26px;
    font-weight: 400;
}

.scale {
    font-size: 24px;
    font-weight: 600;
}

.site-name {
    fill: #111;
    font-size: 60px;
    font-weight: 400;
    font-feature-settings: normal;
}

.caption {
    margin: 12px 0 0 210px;
    color: #fe0000;
    font-family: "Noto Sans CJK JP", sans-serif;
    font-feature-settings: normal;
    font-size: 62px;
    font-weight: 500;
    line-height: 64px;
    white-space: nowrap;
}

.hand-cursor {
    position: absolute;
    top: 638px;
    left: 366px;
}

.title-block {
    display: grid;
    grid-template-columns: 90px 299px 453px 1fr;
    height: 53px;
    margin: 17px 0 0 29px;
    border-top: 2px solid #000;
    border-bottom: 2px solid #000;
    color: #111;
}

.mark {
    padding: 16px 0 0 39px;
}

.company {
    border-right: 1px solid #aaa;
}

.company .rule {
    height: 25px;
    border-bottom: 1px solid #aaa;
}

.company span {
    display: inline-block;
    height: 27px;
    margin-left: 21px;
    background: #fff;
    font-feature-settings: normal;
    font-size: 20px;
    font-weight: 400;
    line-height: 32px;
}

.blank {
    display: grid;
    grid-template-rows: 16px 17px 16px;
    border-right: 1px solid #aaa;
}

.blank i + i {
    border-top: 1px solid #aaa;
}

.names div {
    display: flex;
    height: 24px;
}

.names div + div {
    border-top: 1px solid #aaa;
}

.names dt {
    width: 44px;
    margin-left: 12px;
    font-feature-settings: normal;
    font-size: 10px;
    line-height: 7px;
}

.names dd {
    font-size: 17px;
    font-weight: 400;
    line-height: 33px;
}

/* scrollbars */
.scroll-v {
    display: flex;
    flex-direction: column;
    align-items: center;
    justify-content: space-between;
    width: 20px;
    padding: 8px 0;
    background: #f0f0f0;
}

.thumb-v {
    width: 20px;
    height: 44%;
    margin-top: auto;
    margin-bottom: 7px;
    background: #cbcbcb;
}

.statusbar {
    display: flex;
    height: 20px;
    background: #e6e6e6;
    font-size: 14px;
    line-height: 21px;
}

.page-size {
    width: 135px;
    padding-left: 24px;
    white-space: nowrap;
}

.scroll-h {
    display: flex;
    flex: 1;
    align-items: center;
    justify-content: space-between;
    padding: 0 8px 0 7px;
    background: #efefef;
}

.thumb-h {
    width: 78%;
    height: 20px;
    margin: 0 auto 0 8px;
    background: #cbcbcb;
}

.corner {
    width: 20px;
    background: #fafafa;
}

/* right panel */
.panel {
    display: flex;
    flex: none;
    flex-direction: column;
    width: 364px;
    background: #fbfbfb;
    color: #333;
    font-size: 16px;
}

.search {
    height: 44px;
    margin: 18px 18px 0 17px;
    padding-left: 16px;
    border: 1px solid #ddd;
    background: #fff;
}

.search::placeholder {
    color: #777;
}

.tools {
    display: flex;
    height: 642px;
    margin-top: 17px;
    border-bottom: 1px solid #ddd;
    overflow: hidden;
}

.tools-list {
    flex: 1;
    min-width: 0;
}

.tool-head {
    display: flex;
    align-items: center;
    width: 100%;
    height: 50px;
    padding: 0 28px 0 30px;
    gap: 13px;
    border-bottom: 1px solid #ddd;
    font-size: 18px;
}

.tool-head span {
    flex: 1;
    padding-bottom: 2px;
    text-align: left;
}

.tool-create {
    height: 59px;
    border-bottom: 0;
    border-top: 1px solid #ddd;
}

.tool-edit {
    border-bottom: 0;
}

.export {
    padding: 25px 18px 52px;
}

.export-title {
    display: flex;
    align-items: center;
    justify-content: space-between;
    height: 26px;
}

.export h2 {
    color: #222;
    font-size: 19px;
    font-weight: 600;
}

.desc {
    margin-top: 14px;
    font-feature-settings: normal;
    line-height: 21px;
    white-space: nowrap;
}

.pick {
    display: block;
    margin-top: 16px;
    font-feature-settings: normal;
    line-height: 22px;
}

.file-box,
.select-box {
    display: flex;
    align-items: center;
    justify-content: space-between;
    height: 36px;
    margin-top: 11px;
    border: 1px solid #ddd;
    border-radius: 4px;
    padding: 0 8px 0 12px;
    font-size: 15px;
}

.export label {
    display: block;
    margin-top: 22px;
    font-feature-settings: normal;
    font-size: 15px;
    line-height: 22px;
}

.select-box {
    position: relative;
    margin-right: -3px;
    padding: 0;
}

.select-box select {
    width: 100%;
    height: 34px;
    padding-left: 12px;
    appearance: none;
}

.select-box svg {
    position: absolute;
    top: 12px;
    right: 14px;
}

.lang-title {
    margin-top: 19px;
    font-feature-settings: normal;
    font-size: 15px;
    line-height: 22px;
}

.lang {
    margin-top: 7px;
    font-feature-settings: normal;
    line-height: 22px;
}

.lang a {
    margin-left: 3px;
}

.convert {
    display: block;
    width: 100%;
    height: 38px;
    margin-top: 51px;
    padding-bottom: 2px;
    border-radius: 19px;
    background: #1b7cec;
    color: #fff;
    font-size: 18px;
    font-weight: 400;
}

.tools-scroll {
    display: flex;
    flex-direction: column;
    align-items: center;
    width: 20px;
    padding: 8px 0;
    background: #f0f0f0;
}

.tools-scroll span {
    width: 20px;
    height: 331px;
    margin: 7px 0 auto;
    background: #cbcbcb;
}

.promo {
    display: flex;
    flex-direction: column;
    align-items: center;
    padding-top: 42px;
    color: #222;
    font-size: 14px;
    font-weight: 400;
    line-height: 20px;
    text-align: center;
}

.promo a {
    margin-top: 22px;
}

/* taskbar */
.taskbar {
    display: flex;
    height: 49px;
    background: #c8dde5;
}

.taskbar button {
    display: grid;
    place-items: center;
    width: 60px;
    padding-top: 2px;
    border-bottom: 3px solid transparent;
}

.taskbar button:first-child {
    width: 57px;
}

.taskbar .open {
    background: linear-gradient(#1fa3c4, #1fa3c4) center bottom / 49px 3px no-repeat border-box;
}

.taskbar .active {
    border-bottom-color: #1fa3c4;
    background: #e6f1f5;
}

.revit {
    overflow: visible;
}

.tray {
    display: flex;
    align-items: center;
    gap: 20px;
    margin-left: auto;
    padding-right: 4px;
    color: #111;
}

.tray .keyboard {
    margin-right: -7px;
}

.ime {
    font-size: 23px;
    line-height: 48px;
}

.clock {
    align-self: stretch;
    width: 93px;
    margin: 0 -10px;
    background: #c0dfe2;
}

.desktop-edge {
    align-self: stretch;
    margin-left: 6px;
    border-left: 1px solid #96a9b1;
}
```
